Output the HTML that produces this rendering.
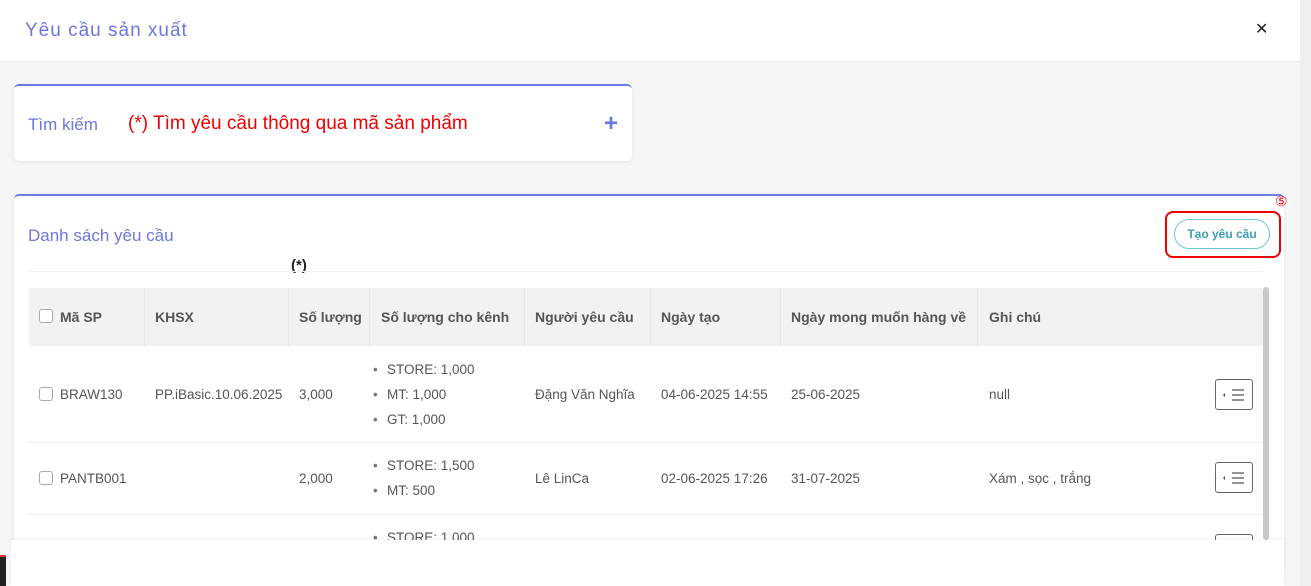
<!DOCTYPE html>
<html><head><meta charset="utf-8"><style>
*{box-sizing:border-box;margin:0;padding:0}
html,body{width:1311px;height:586px;overflow:hidden}
body{background:#f5f6f6;font-family:"Liberation Sans",sans-serif;position:relative;color:#555}
.hdr{position:absolute;left:0;top:0;width:1300px;height:62px;background:#fff;border-bottom:1px solid #e9e9e9}
.hdr h1{position:absolute;left:25px;top:20px;font-size:19px;font-weight:normal;color:#6c76e0;letter-spacing:1px}
.x{position:absolute;left:1255px;top:19px;font-size:16px;color:#222}
.rs{position:absolute;left:1300px;top:0;width:11px;height:586px;background:#efefef}
.card{position:absolute;background:#fff;border-top:2px solid #6c7ae9;border-radius:5px;box-shadow:0 1px 4px rgba(0,0,0,.08)}
.c1{left:14px;top:84px;width:618px;height:77px}
.c2{left:14px;top:194px;width:1270px;height:380px}
.blue{color:#6c76e0;font-size:17px;position:absolute}
.red{position:absolute;left:128px;top:113px;color:#e00;font-size:19px}
.plus{position:absolute;left:604px;top:110px;font-size:24px;color:#6c76e0;font-weight:bold}
.btn{position:absolute;left:1174px;top:219px;width:96px;height:30px;border:1px solid #6cc6d6;border-radius:15px;color:#3aa0b8;font-size:12px;font-weight:bold;text-align:center;line-height:28px}
.rb{position:absolute;left:1165px;top:211px;width:116px;height:47px;border:2px solid #e00;border-radius:8px}
.c5{position:absolute;left:1275px;top:193px;color:#e00;font-size:14px}
.ast{position:absolute;left:291px;top:257px;font-size:15px;font-weight:bold;color:#222}
.th{position:absolute;left:29px;top:288px;width:1234px;height:58px;background:#f2f2f2}
.col{position:absolute;font-size:13.5px}
.h{font-weight:bold;color:#555;top:309px;font-size:14px}
.sep{position:absolute;top:288px;width:1px;height:58px;background:#e6e6e6}
.rl{position:absolute;left:29px;width:1234px;height:1px;background:#eee}
.cb{position:absolute;width:14px;height:14px;border:1px solid #aaa;border-radius:3px;background:#fff}
.ac{position:absolute;left:1215px;width:38px;height:31px;border:1px solid #666;border-radius:3px;background:#fff}
.ac svg{position:absolute;left:5px;top:8px}
.sb{position:absolute;left:1263px;top:287px;width:6px;height:253px;background:#c8c8c8;border-radius:3px}
.ft{position:absolute;left:11px;top:540px;width:1273px;height:46px;background:#fff;box-shadow:0 -2px 4px rgba(0,0,0,.04)}
.dk{position:absolute;left:0;top:555px;width:6px;height:31px;background:#222;border-top:2px solid #e33}
.bl{position:absolute;font-size:13.5px}
.bl:before{content:"•";position:absolute;left:-14px;color:#777}
</style></head><body>
<div class="hdr"><h1>Yêu cầu sản xuất</h1><div class="x">✕</div></div>
<div class="rs"></div>
<div class="card c1"></div>
<div class="blue" style="left:28px;top:115px">Tìm kiếm</div>
<div class="red">(*) Tìm yêu cầu thông qua mã sản phẩm</div>
<div class="plus">+</div>
<div class="card c2"></div>
<div class="blue" style="left:28px;top:226px">Danh sách yêu cầu</div>
<div class="btn">Tạo yêu cầu</div>
<div class="rb"></div>
<div class="c5">⑤</div>
<div class="ast">(*)</div>
<div class="rl" style="top:271px;background:#f3f3f3"></div>
<div class="th"></div>
<div class="sep" style="left:144px"></div><div class="sep" style="left:288px"></div><div class="sep" style="left:369px"></div><div class="sep" style="left:524px"></div><div class="sep" style="left:650px"></div><div class="sep" style="left:780px"></div><div class="sep" style="left:977px"></div>
<div class="cb" style="left:39px;top:309px"></div>
<div class="col h" style="left:60px">Mã SP</div>
<div class="col h" style="left:155px">KHSX</div>
<div class="col h" style="left:299px">Số lượng</div>
<div class="col h" style="left:381px">Số lượng cho kênh</div>
<div class="col h" style="left:535px">Người yêu cầu</div>
<div class="col h" style="left:661px">Ngày tạo</div>
<div class="col h" style="left:791px">Ngày mong muốn hàng về</div>
<div class="col h" style="left:989px">Ghi chú</div>

<div class="cb" style="left:39px;top:387px"></div>
<div class="col" style="left:60px;top:387px">BRAW130</div>
<div class="col" style="left:155px;top:387px">PP.iBasic.10.06.2025</div>
<div class="col" style="left:299px;top:387px">3,000</div>
<div class="bl" style="left:387px;top:362px">STORE: 1,000</div>
<div class="bl" style="left:387px;top:387px">MT: 1,000</div>
<div class="bl" style="left:387px;top:412px">GT: 1,000</div>
<div class="col" style="left:535px;top:387px">Đặng Văn Nghĩa</div>
<div class="col" style="left:661px;top:387px">04-06-2025 14:55</div>
<div class="col" style="left:791px;top:387px">25-06-2025</div>
<div class="col" style="left:989px;top:387px">null</div>
<div class="ac" style="top:379px"><svg width="28" height="14"><path d="M2 7l2-2v4z" fill="#444"/><path d="M11 2h12M11 7h12M11 12h12" stroke="#555" stroke-width="1.3"/></svg></div>
<div class="rl" style="top:442px"></div>

<div class="cb" style="left:39px;top:471px"></div>
<div class="col" style="left:60px;top:471px">PANTB001</div>
<div class="col" style="left:299px;top:471px">2,000</div>
<div class="bl" style="left:387px;top:458px">STORE: 1,500</div>
<div class="bl" style="left:387px;top:483px">MT: 500</div>
<div class="col" style="left:535px;top:471px">Lê LinCa</div>
<div class="col" style="left:661px;top:471px">02-06-2025 17:26</div>
<div class="col" style="left:791px;top:471px">31-07-2025</div>
<div class="col" style="left:989px;top:471px">Xám , sọc , trắng</div>
<div class="ac" style="top:462px"><svg width="28" height="14"><path d="M2 7l2-2v4z" fill="#444"/><path d="M11 2h12M11 7h12M11 12h12" stroke="#555" stroke-width="1.3"/></svg></div>
<div class="rl" style="top:514px"></div>
<div class="bl" style="left:387px;top:530px">STORE: 1,000</div>
<div class="ac" style="top:534px"></div>
<div class="sb"></div>
<div class="ft"></div>
<div class="dk"></div>
</body></html>
